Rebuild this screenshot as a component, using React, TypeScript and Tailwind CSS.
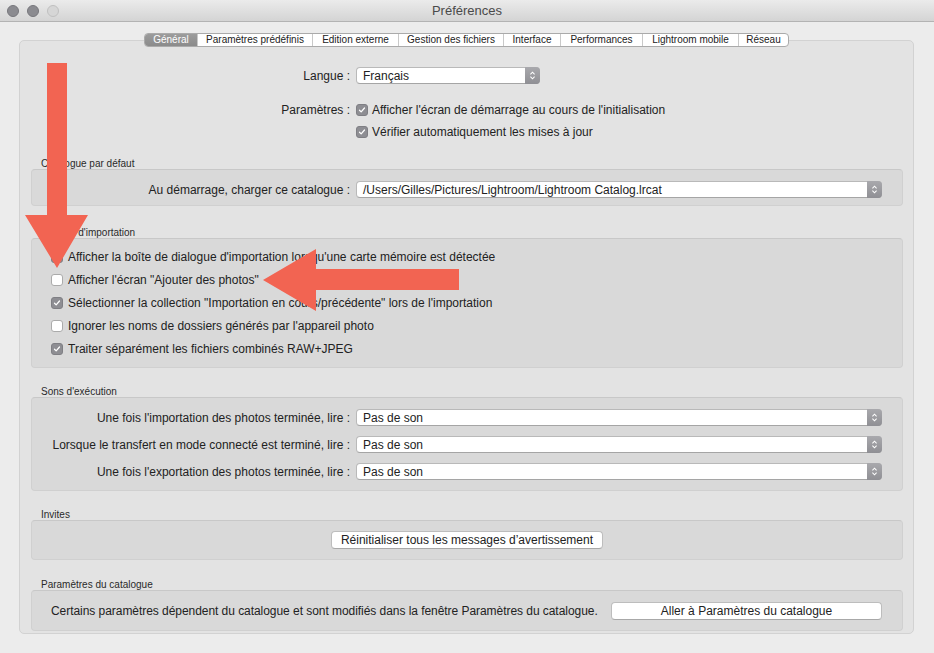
import React from "react";

const tabs = [
  { label: "Général", w: "w-[52px]", active: true },
  { label: "Paramètres prédéfinis", w: "w-[115px]" },
  { label: "Edition externe", w: "w-[86px]" },
  { label: "Gestion des fichiers", w: "w-[105px]" },
  { label: "Interface", w: "w-[57px]" },
  { label: "Performances", w: "w-[82px]" },
  { label: "Lightroom mobile", w: "w-[96px]" },
  { label: "Réseau", w: "w-[50px]" },
];

function Checkbox({ checked }: { checked?: boolean }) {
  if (!checked) {
    return <span className="w-[12px] h-[12px] rounded-[3px] bg-white border border-[#ababab] shrink-0" />;
  }
  return (
    <span className="w-[12px] h-[12px] rounded-[3px] bg-[#8e8e93] border border-[#7f7f84] flex items-center justify-center shrink-0">
      <svg viewBox="0 0 12 12" className="w-[10px] h-[10px]">
        <path d="M3 6.3 L5 8.3 L9 3.6" stroke="white" strokeWidth="1.5" fill="none" strokeLinecap="round" strokeLinejoin="round" />
      </svg>
    </span>
  );
}

function Select({ value, className = "" }: { value: string; className?: string }) {
  return (
    <div className={"h-[17px] flex bg-white border border-[#b9b9b9] border-b-[#a5a5a5] rounded-[4px] " + className}>
      <span className="flex-1 pl-[6px] text-[12px] leading-[16px] text-[#222]">{value}</span>
      <span className="w-[15px] -my-px -mr-px rounded-r-[4px] bg-linear-to-b from-[#a9a9ad] to-[#8f8f94] flex items-center justify-center">
        <svg viewBox="0 0 8 12" className="w-[7px] h-[11px]">
          <path d="M1.6 4.6 L4 2.2 L6.4 4.6 M1.6 7.4 L4 9.8 L6.4 7.4" stroke="white" strokeWidth="1.2" fill="none" />
        </svg>
      </span>
    </div>
  );
}

function Button({ children, className = "" }: { children: React.ReactNode; className?: string }) {
  return (
    <div className={"h-[18px] bg-white border border-[#bdbdbd] border-b-[#a8a8a8] rounded-[4px] text-[12px] leading-[17px] text-center text-[#222] " + className}>
      {children}
    </div>
  );
}

function SectionLabel({ children }: { children: React.ReactNode }) {
  return <div className="h-[12px] pl-[21px] text-[10px] leading-[14px] text-[#2a2a2a]">{children}</div>;
}

function Box({ children, className = "" }: { children: React.ReactNode; className?: string }) {
  return (
    <div className={"ml-[11px] mr-[10px] bg-[#d9d9d9] border border-[#d0d0d0] border-t-[#c8c8c8] rounded-[4px] " + className}>
      {children}
    </div>
  );
}

function LabeledSelect({ label, value }: { label: string; value: string }) {
  return (
    <div className="flex items-center h-[17px]">
      <span className="w-[318px] text-right text-[12px] text-[#222] whitespace-nowrap">{label}</span>
      <Select value={value} className="ml-[6px] flex-1 mr-[20px]" />
    </div>
  );
}

function ImportRow({ checked, label }: { checked?: boolean; label: string }) {
  return (
    <div className="h-[23px] flex items-center gap-[5px] pl-[19px]">
      <Checkbox checked={checked} />
      <span className="text-[12px] text-[#222] whitespace-nowrap">{label}</span>
    </div>
  );
}

export default function App() {
  return (
    <div className="w-[934px] h-[653px] bg-[#ececec] relative overflow-hidden font-['Liberation_Sans',Arial,sans-serif]">
      {/* title bar */}
      <div className="h-[22px] border-b border-[#b3b3b3] bg-linear-to-b from-[#ebebeb] to-[#d4d4d4] flex items-center relative">
        <div className="flex gap-[8px] pl-[7px]">
          <span className="w-[12px] h-[12px] rounded-full bg-[#8b8b90] border border-[#77777c]" />
          <span className="w-[12px] h-[12px] rounded-full bg-[#8b8b90] border border-[#77777c]" />
          <span className="w-[12px] h-[12px] rounded-full bg-[#d6d6d6] border border-[#c0c0c0]" />
        </div>
        <span className="absolute left-0 right-0 text-center text-[13px] text-[#4a4a4a]">Préférences</span>
      </div>

      <div className="pl-[19px] pr-[20px] pt-[11px]">
        {/* tabs */}
        <div className="flex justify-center relative z-10">
          <div className="flex h-[14px] bg-white border border-[#aaaaaa] rounded-[4px] overflow-hidden">
            {tabs.map((t, i) => (
              <div
                key={t.label}
                className={
                  t.w +
                  " text-center text-[10px] leading-[12px] " +
                  (i > 0 ? "border-l border-[#c9c9c9] " : "") +
                  (t.active ? "bg-linear-to-b from-[#9c9c9c] to-[#8b8b8b] text-white" : "text-[#222]")
                }
              >
                {t.label}
              </div>
            ))}
          </div>
        </div>

        {/* main panel */}
        <div className="-mt-[7px] bg-[#e3e3e3] border border-[#d2d2d2] rounded-[5px] pt-[26px] pb-[2px]">
          <div className="flex items-center h-[17px]">
            <span className="w-[330px] text-right text-[12px] text-[#222]">Langue :</span>
            <Select value="Français" className="ml-[6px] w-[184px]" />
          </div>
          <div className="mt-[17px] flex items-center h-[18px]">
            <span className="w-[330px] text-right text-[12px] text-[#222]">Paramètres :</span>
            <span className="ml-[6px] flex items-center gap-[4px]">
              <Checkbox checked />
              <span className="text-[12px] text-[#222]">Afficher l'écran de démarrage au cours de l'initialisation</span>
            </span>
          </div>
          <div className="mt-[4px] flex items-center h-[18px] pl-[336px] gap-[4px]">
            <Checkbox checked />
            <span className="text-[12px] text-[#222]">Vérifier automatiquement les mises à jour</span>
          </div>

          <div className="mt-[16px]">
            <SectionLabel>Catalogue par défaut</SectionLabel>
            <Box className="pt-[11px] pb-[7px]">
              <LabeledSelect
                label="Au démarrage, charger ce catalogue :"
                value="/Users/Gilles/Pictures/Lightroom/Lightroom Catalog.lrcat"
              />
            </Box>
          </div>

          <div className="mt-[20px]">
            <SectionLabel>Options d'importation</SectionLabel>
            <Box className="pt-[6px] pb-[7px]">
              <ImportRow checked label="Afficher la boîte de dialogue d'importation lorsqu'une carte mémoire est détectée" />
              <ImportRow label={'Afficher l\'écran "Ajouter des photos"'} />
              <ImportRow checked label={'Sélectionner la collection "Importation en cours/précédente" lors de l\'importation'} />
              <ImportRow label="Ignorer les noms de dossiers générés par l'appareil photo" />
              <ImportRow checked label="Traiter séparément les fichiers combinés RAW+JPEG" />
            </Box>
          </div>

          <div className="mt-[17px]">
            <SectionLabel>Sons d'exécution</SectionLabel>
            <Box className="pt-[11px] pb-[10px] flex flex-col gap-[10px]">
              <LabeledSelect label="Une fois l'importation des photos terminée, lire :" value="Pas de son" />
              <LabeledSelect label="Lorsque le transfert en mode connecté est terminé, lire :" value="Pas de son" />
              <LabeledSelect label="Une fois l'exportation des photos terminée, lire :" value="Pas de son" />
            </Box>
          </div>

          <div className="mt-[17px]">
            <SectionLabel>Invites</SectionLabel>
            <Box className="pt-[10px] pb-[10px] flex justify-center">
              <Button className="w-[272px]">Réinitialiser tous les messages d’avertissement</Button>
            </Box>
          </div>

          <div className="mt-[18px]">
            <SectionLabel>Paramètres du catalogue</SectionLabel>
            <Box className="pt-[11px] pb-[10px] pl-[19px] pr-[20px] flex items-center">
              <span className="text-[12px] text-[#222] whitespace-nowrap tracking-[-0.05px]">
                Certains paramètres dépendent du catalogue et sont modifiés dans la fenêtre Paramètres du catalogue.
              </span>
              <Button className="ml-auto w-[271px]">Aller à Paramètres du catalogue</Button>
            </Box>
          </div>
        </div>
      </div>

      {/* red annotation arrows */}
      <svg className="absolute inset-0 pointer-events-none" width="934" height="653" viewBox="0 0 934 653">
        <polygon points="47,63 67,63 67,215 88,215 57,268 25,215 47,215" fill="#f26452" />
        <polygon points="459,269 459,290 316,290 316,311 263,280 316,249 316,269" fill="#f26452" />
      </svg>
    </div>
  );
}
